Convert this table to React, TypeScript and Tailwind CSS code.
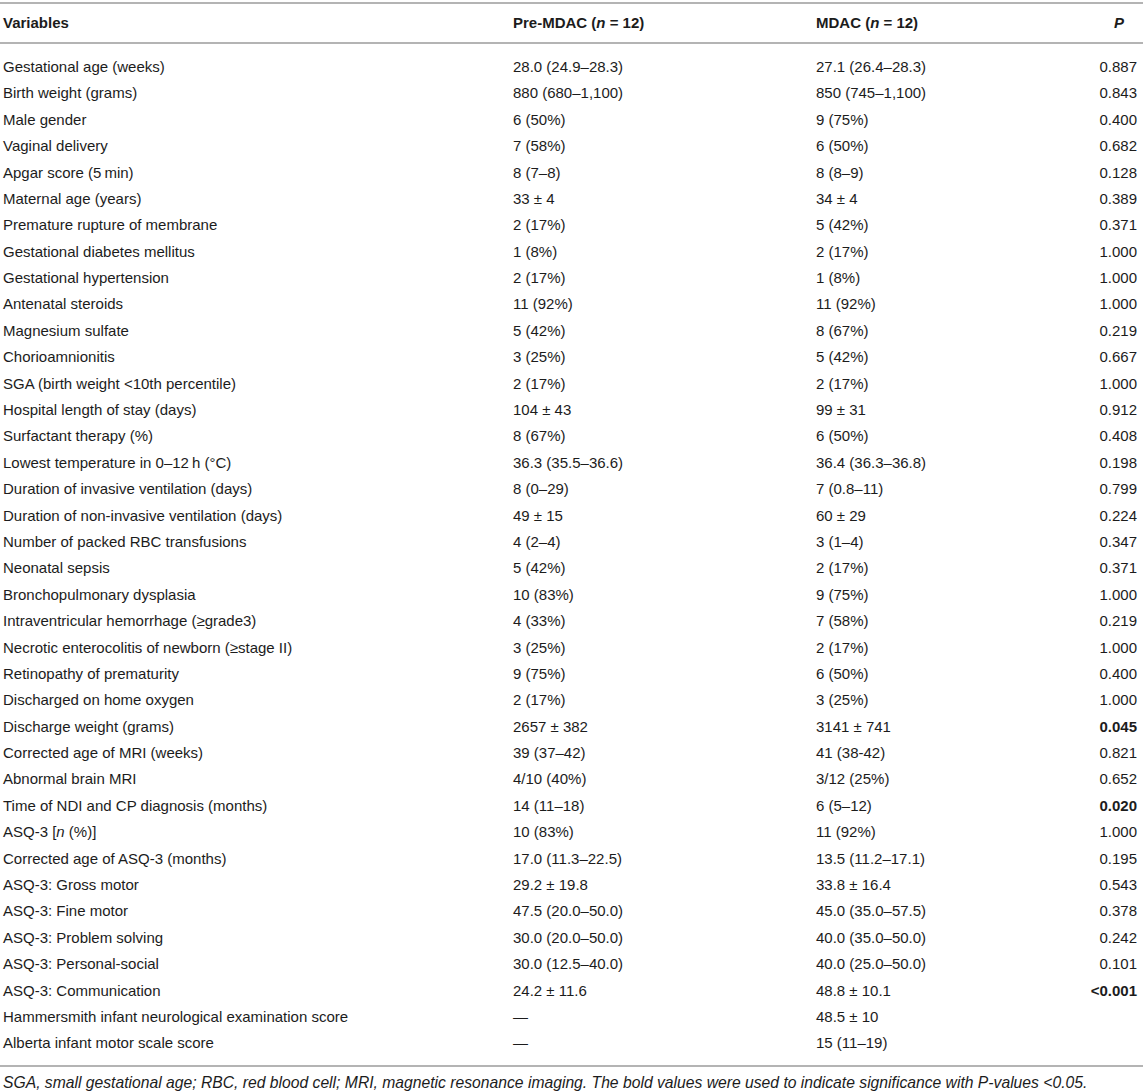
import React from "react";

type Row = { v: React.ReactNode; a: React.ReactNode; b: React.ReactNode; p: React.ReactNode; bold?: boolean };

const rows: Row[] = [
  { v: "Gestational age (weeks)", a: "28.0 (24.9–28.3)", b: "27.1 (26.4–28.3)", p: "0.887" },
  { v: "Birth weight (grams)", a: "880 (680–1,100)", b: "850 (745–1,100)", p: "0.843" },
  { v: "Male gender", a: "6 (50%)", b: "9 (75%)", p: "0.400" },
  { v: "Vaginal delivery", a: "7 (58%)", b: "6 (50%)", p: "0.682" },
  { v: "Apgar score (5\u2009min)", a: "8 (7–8)", b: "8 (8–9)", p: "0.128" },
  { v: "Maternal age (years)", a: "33 ± 4", b: "34 ± 4", p: "0.389" },
  { v: "Premature rupture of membrane", a: "2 (17%)", b: "5 (42%)", p: "0.371" },
  { v: "Gestational diabetes mellitus", a: "1 (8%)", b: "2 (17%)", p: "1.000" },
  { v: "Gestational hypertension", a: "2 (17%)", b: "1 (8%)", p: "1.000" },
  { v: "Antenatal steroids", a: "11 (92%)", b: "11 (92%)", p: "1.000" },
  { v: "Magnesium sulfate", a: "5 (42%)", b: "8 (67%)", p: "0.219" },
  { v: "Chorioamnionitis", a: "3 (25%)", b: "5 (42%)", p: "0.667" },
  { v: "SGA (birth weight <10th percentile)", a: "2 (17%)", b: "2 (17%)", p: "1.000" },
  { v: "Hospital length of stay (days)", a: "104 ± 43", b: "99 ± 31", p: "0.912" },
  { v: "Surfactant therapy (%)", a: "8 (67%)", b: "6 (50%)", p: "0.408" },
  { v: "Lowest temperature in 0–12\u2009h (\u00b0C)", a: "36.3 (35.5–36.6)", b: "36.4 (36.3–36.8)", p: "0.198" },
  { v: "Duration of invasive ventilation (days)", a: "8 (0–29)", b: "7 (0.8–11)", p: "0.799" },
  { v: "Duration of non-invasive ventilation (days)", a: "49 ± 15", b: "60 ± 29", p: "0.224" },
  { v: "Number of packed RBC transfusions", a: "4 (2–4)", b: "3 (1–4)", p: "0.347" },
  { v: "Neonatal sepsis", a: "5 (42%)", b: "2 (17%)", p: "0.371" },
  { v: "Bronchopulmonary dysplasia", a: "10 (83%)", b: "9 (75%)", p: "1.000" },
  { v: "Intraventricular hemorrhage (≥grade3)", a: "4 (33%)", b: "7 (58%)", p: "0.219" },
  { v: "Necrotic enterocolitis of newborn (≥stage II)", a: "3 (25%)", b: "2 (17%)", p: "1.000" },
  { v: "Retinopathy of prematurity", a: "9 (75%)", b: "6 (50%)", p: "0.400" },
  { v: "Discharged on home oxygen", a: "2 (17%)", b: "3 (25%)", p: "1.000" },
  { v: "Discharge weight (grams)", a: "2657 ± 382", b: "3141 ± 741", p: "0.045", bold: true },
  { v: "Corrected age of MRI (weeks)", a: "39 (37–42)", b: "41 (38-42)", p: "0.821" },
  { v: "Abnormal brain MRI", a: "4/10 (40%)", b: "3/12 (25%)", p: "0.652" },
  { v: "Time of NDI and CP diagnosis (months)", a: "14 (11–18)", b: "6 (5–12)", p: "0.020", bold: true },
  { v: <>ASQ-3 [<i>n</i> (%)]</>, a: "10 (83%)", b: "11 (92%)", p: "1.000" },
  { v: "Corrected age of ASQ-3 (months)", a: "17.0 (11.3–22.5)", b: "13.5 (11.2–17.1)", p: "0.195" },
  { v: "ASQ-3: Gross motor", a: "29.2 ± 19.8", b: "33.8 ± 16.4", p: "0.543" },
  { v: "ASQ-3: Fine motor", a: "47.5 (20.0–50.0)", b: "45.0 (35.0–57.5)", p: "0.378" },
  { v: "ASQ-3: Problem solving", a: "30.0 (20.0–50.0)", b: "40.0 (35.0–50.0)", p: "0.242" },
  { v: "ASQ-3: Personal-social", a: "30.0 (12.5–40.0)", b: "40.0 (25.0–50.0)", p: "0.101" },
  { v: "ASQ-3: Communication", a: "24.2 ± 11.6", b: "48.8 ± 10.1", p: "<0.001", bold: true },
  { v: "Hammersmith infant neurological examination score", a: "—", b: "48.5 ± 10", p: "" },
  { v: "Alberta infant motor scale score", a: "—", b: "15 (11–19)", p: "" },
];

const grid = "grid grid-cols-[510px_303px_263px_1fr] pl-[3px]";

export default function App() {
  return (
    <div className="w-[1143px] h-[1092px] bg-white font-['Liberation_Sans',Arial,sans-serif] text-[15px] text-[#1c1c1c] overflow-hidden">
      <div className="mt-[2px] border-t-2 border-[#b4b4b4]">
        <div className={`${grid} h-[38px] items-center font-bold`}>
          <div>Variables</div>
          <div>
            Pre-MDAC (<i>n</i> = 12)
          </div>
          <div>
            MDAC (<i>n</i> = 12)
          </div>
          <div className="pl-[35px]">
            <i>P</i>
          </div>
        </div>
      </div>
      <div className="border-t-2 border-[#b4b4b4] pt-[10px] pb-[8px]">
        {rows.map((r, i) => (
          <div key={i} className={`${grid} h-[26.4px] items-center whitespace-nowrap`}>
            <div>{r.v}</div>
            <div>{r.a}</div>
            <div>{r.b}</div>
            <div className={`text-right pr-[6px] ${r.bold ? "font-bold" : ""}`}>{r.p}</div>
          </div>
        ))}
      </div>
      <div className="border-t-2 border-[#b4b4b4] pl-[3px] pt-[7px] italic whitespace-nowrap text-[15.7px] leading-[18px]">
        SGA, small gestational age; RBC, red blood cell; MRI, magnetic resonance imaging. The bold values were used to indicate significance with P-values &lt;0.05.
      </div>
    </div>
  );
}
